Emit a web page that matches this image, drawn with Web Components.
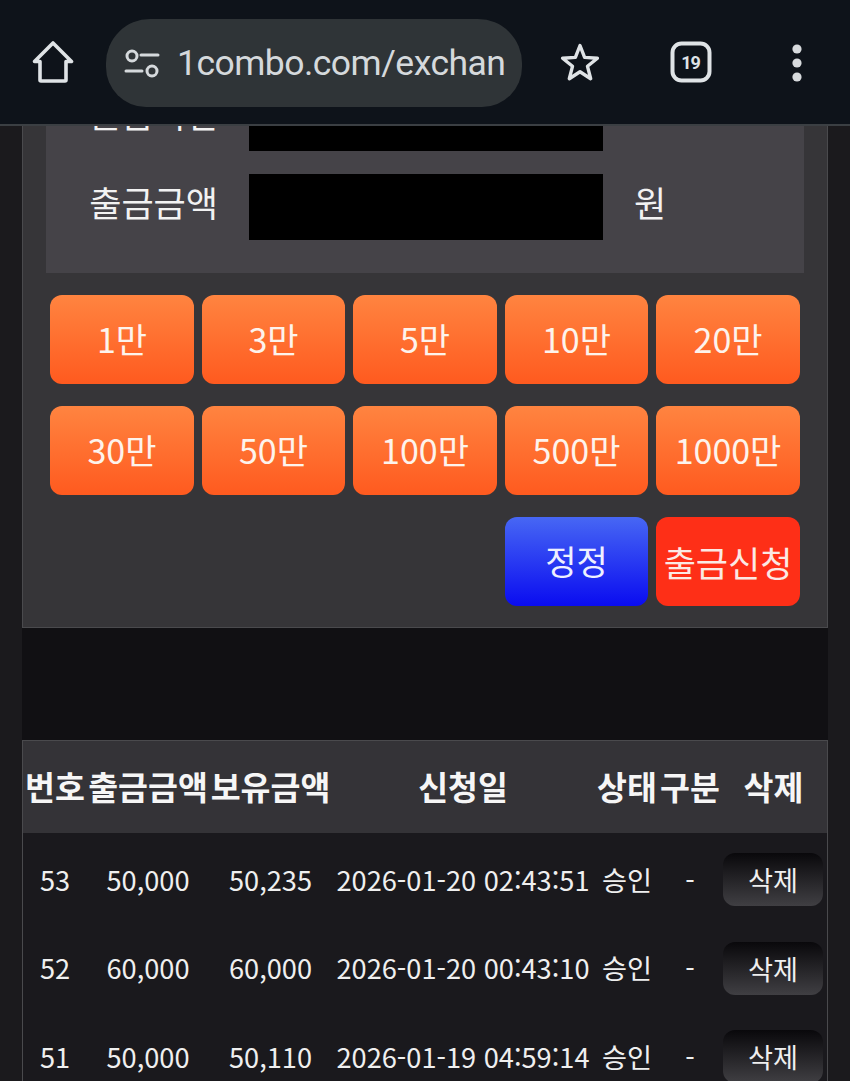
<!DOCTYPE html>
<html lang="ko">
<head>
<meta charset="utf-8">
<title>exchange</title>
<style>
    html, body {
        margin: 0;
        height: 1081px;
        overflow: hidden;
        background: #1b1a1d;
        font-family: "Noto Sans CJK KR", "Noto Sans", sans-serif;
        color: #fff;
    }
    .page {
        display: block;
        height: 955px;
        overflow: hidden;
        padding: 0 22px;
    }
    .sheet {
        background: #111013;
        height: 955px;
    }
</style>
</head>
<body>
<browser-bar url="1combo.com/exchan" tabs="19"></browser-bar>
<div class="page">
  <div class="sheet">
    <exchange-panel>
        <form-row label="출금비번"></form-row>
        <form-row label="출금금액" unit="원"></form-row>
        <amount-button slot="amounts">1만</amount-button>
        <amount-button slot="amounts">3만</amount-button>
        <amount-button slot="amounts">5만</amount-button>
        <amount-button slot="amounts">10만</amount-button>
        <amount-button slot="amounts">20만</amount-button>
        <amount-button slot="amounts">30만</amount-button>
        <amount-button slot="amounts">50만</amount-button>
        <amount-button slot="amounts">100만</amount-button>
        <amount-button slot="amounts">500만</amount-button>
        <amount-button slot="amounts">1000만</amount-button>
        <amount-button slot="amounts" kind="blank"></amount-button>
        <amount-button slot="amounts" kind="blank"></amount-button>
        <amount-button slot="amounts" kind="blank"></amount-button>
        <amount-button slot="amounts" kind="reset">정정</amount-button>
        <amount-button slot="amounts" kind="submit">출금신청</amount-button>
    </exchange-panel>
    <history-table>
        <history-row no="53" amount="50,000" balance="50,235" date="2026-01-20 02:43:51"></history-row>
        <history-row no="52" amount="60,000" balance="60,000" date="2026-01-20 00:43:10"></history-row>
        <history-row no="51" amount="50,000" balance="50,110" date="2026-01-19 04:59:14"></history-row>
    </history-table>
  </div>
</div>

<script>
const ICON_COLOR = '#dfe3e6'

class BrowserBar extends HTMLElement {
    constructor() {
        super()
        const url = this.getAttribute('url')
        const tabs = this.getAttribute('tabs')
        this.attachShadow({ mode: 'open' })
        this.shadowRoot.innerHTML = `
        <style>
            :host {
                display: grid;
                grid-template-columns: 106px 416px 116px 106px 106px;
                align-items: center;
                height: 124px;
                background: #0e131a;
                border-bottom: 2px solid #3b3f43;
                color: ${ICON_COLOR};
            }
            .slot {
                display: flex;
                justify-content: center;
                align-items: center;
            }
            .omnibox {
                height: 88px;
                margin-top: 2px;
                border-radius: 44px 44px 40px 40px;
                background: #2f3437;
                display: flex;
                align-items: center;
                gap: 17px;
                padding-left: 18px;
                overflow: hidden;
            }
            .url {
                font-family: Roboto, sans-serif;
                font-size: 35.5px;
                letter-spacing: -0.52px;
                white-space: nowrap;
                color: #d5d9dc;
            }
            svg { display: block; }
            .tab-count {
                font-family: Roboto, sans-serif;
                font-weight: 700;
                font-size: 18px;
                fill: ${ICON_COLOR};
            }
            .menu { margin-top: 2px; }
        </style>
        <div class="slot">
            <svg width="42" height="44" viewBox="0 0 42 44" fill="none" stroke="${ICON_COLOR}" stroke-width="3.6" stroke-linejoin="round">
                <path d="M21 3 L39.5 21.5 H34 V40 Q34 41 33 41 H9 Q8 41 8 40 V21.5 H2.5 Z"/>
            </svg>
        </div>
        <div class="omnibox">
            <svg width="36" height="32" viewBox="0 0 36 32" fill="none" stroke="#d5d9dc" stroke-width="3" stroke-linecap="round">
                <circle cx="8" cy="9" r="5"/>
                <path d="M17 8 H34"/>
                <path d="M2 24 H18"/>
                <circle cx="28" cy="24" r="5"/>
            </svg>
            <span class="url">${url}</span>
        </div>
        <div class="slot">
            <svg width="40" height="40" viewBox="0 0 40 40" fill="none" stroke="${ICON_COLOR}" stroke-width="3.4" stroke-linejoin="round">
                <path d="M20 3.5 L24.6 15.4 L37.4 16.2 L27.5 24.3 L30.7 36.7 L20 29.8 L9.3 36.7 L12.5 24.3 L2.6 16.2 L15.4 15.4 Z"/>
            </svg>
        </div>
        <div class="slot">
            <svg width="42" height="42" viewBox="0 0 42 42">
                <rect x="2.5" y="2.5" width="37" height="37" rx="9" fill="none" stroke="${ICON_COLOR}" stroke-width="4"/>
                <text class="tab-count" x="20.5" y="27.5" text-anchor="middle" letter-spacing="-1">${tabs}</text>
            </svg>
        </div>
        <div class="slot menu">
            <svg width="12" height="40" viewBox="0 0 12 40" fill="#d7dadd">
                <circle cx="6" cy="6" r="4.6"/>
                <circle cx="6" cy="20" r="4.6"/>
                <circle cx="6" cy="34" r="4.6"/>
            </svg>
        </div>
        `
    }
}

// card holding the form box and the amount buttons, scrolled so its top is under the bar
const panel_template = document.createElement('template')
panel_template.innerHTML = `
<style>
    :host {
        display: block;
        box-sizing: border-box;
        height: 502px;
        overflow: hidden;
        background: #363538;
        border: solid #4a4a4d;
        border-width: 0 1px 1px 1px;
        padding: 0 23px 23px;
    }
    .form-box {
        margin-top: -41px;
        background: #454348;
        padding: 0 0 33px;
        display: flex;
        flex-direction: column;
        gap: 23px;
    }
    .amounts {
        margin-top: 22px;
        padding: 0 4px;
        display: grid;
        grid-template-columns: repeat(5, 1fr);
        gap: 22.5px 7.6px;
    }
</style>
<div class="form-box"><slot></slot></div>
<div class="amounts"><slot name="amounts"></slot></div>
`
class ExchangePanel extends HTMLElement {
    constructor() {
        super()
        this.attachShadow({ mode: 'open' })
        this.shadowRoot.appendChild(panel_template.content.cloneNode(true))
    }
}

class FormRow extends HTMLElement {
    constructor() {
        super()
        this.attachShadow({ mode: 'open' })
        this.shadowRoot.innerHTML = `
        <style>
            :host {
                display: grid;
                grid-template-columns: 203px 354px auto;
                align-items: center;
                height: 66px;
                font-size: 35px;
                color: #f2f2f2;
            }
            .label {
                text-align: right;
                padding-right: 31px;
                line-height: 1;
                margin-top: -12px;
                white-space: nowrap;
            }
            .box { background: #000; height: 66px; }
            .unit { padding-left: 31px; line-height: 1; margin-top: -12px; }
        </style>
        <div class="label">${this.getAttribute('label')}</div>
        <div class="box"></div>
        <div class="unit">${this.getAttribute('unit') || ''}</div>
        `
    }
}

const amount_template = document.createElement('template')
amount_template.innerHTML = `
<style>
    :host {
        display: flex;
        align-items: center;
        justify-content: center;
        height: 88.5px;
        border-radius: 12px;
        background: linear-gradient(#ff8440, #ff5a1f);
        color: #fdf3ec;
        font-size: 34px;
        line-height: 1;
        white-space: nowrap;
    }
    :host([kind="blank"]) { background: none; }
    :host([kind="reset"]) { background: linear-gradient(#4767f4, #0a0cf0); color: #eef0ff; }
    :host([kind="submit"]) { background: #fe2f17; color: #fbe9e4; font-size: 35px; }
</style>
<slot></slot>
`
class AmountButton extends HTMLElement {
    constructor() {
        super()
        this.attachShadow({ mode: 'open' })
        this.shadowRoot.appendChild(amount_template.content.cloneNode(true))
    }
}

const COLUMNS = 'grid-template-columns: 64px 122px 123px 262px 66px 60px 1fr;'

const table_template = document.createElement('template')
table_template.innerHTML = `
<style>
    :host {
        display: block;
        margin-top: 112px;
        background: #1a191d;
        border: solid #4a4a4d;
        border-width: 1px 1px 0 1px;
    }
    .head {
        display: grid;
        ${COLUMNS}
        align-items: center;
        box-sizing: border-box;
        height: 92px;
        padding-bottom: 4px;
        background: #343337;
        font-size: 32.5px;
        font-weight: 700;
        text-align: center;
        white-space: nowrap;
        color: #f6f6f6;
    }
    .body { padding-top: 2.5px; }
</style>
<div class="head">
    <div>번호</div><div>출금금액</div><div>보유금액</div><div>신청일</div><div>상태</div><div>구분</div><div>삭제</div>
</div>
<div class="body"><slot></slot></div>
`
class HistoryTable extends HTMLElement {
    constructor() {
        super()
        this.attachShadow({ mode: 'open' })
        this.shadowRoot.appendChild(table_template.content.cloneNode(true))
    }
}

class HistoryRow extends HTMLElement {
    constructor() {
        super()
        this.attachShadow({ mode: 'open' })
        this.shadowRoot.innerHTML = `
        <style>
            :host {
                display: grid;
                ${COLUMNS}
                align-items: center;
                height: 88.5px;
                font-size: 27.2px;
                text-align: center;
                white-space: nowrap;
                color: #efefef;
            }
            .cell { margin-top: -2px; }
            .delete {
                box-sizing: border-box;
                width: 100px;
                height: 53px;
                margin-left: 3px;
                border-radius: 12px;
                background: linear-gradient(#09080b, #403f43);
                display: flex;
                align-items: center;
                justify-content: center;
                line-height: 1;
            }
        </style>
        <div class="cell">${this.getAttribute('no')}</div>
        <div class="cell">${this.getAttribute('amount')}</div>
        <div class="cell">${this.getAttribute('balance')}</div>
        <div class="cell">${this.getAttribute('date')}</div>
        <div class="cell">승인</div>
        <div class="cell">-</div>
        <div class="delete">삭제</div>
        `
    }
}

window.customElements.define('browser-bar', BrowserBar)
window.customElements.define('exchange-panel', ExchangePanel)
window.customElements.define('form-row', FormRow)
window.customElements.define('amount-button', AmountButton)
window.customElements.define('history-table', HistoryTable)
window.customElements.define('history-row', HistoryRow)
</script>
</body>
</html>
